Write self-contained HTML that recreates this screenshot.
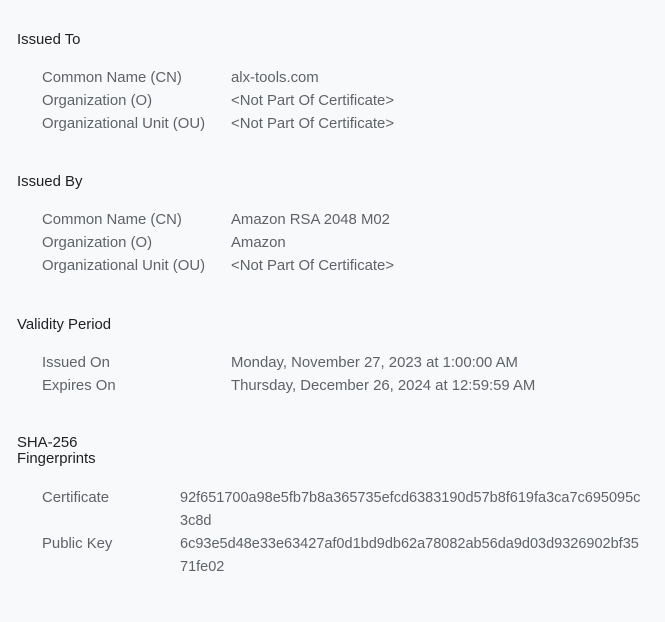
<!DOCTYPE html>
<html><head><style>
html,body{margin:0;padding:0;background:#f8f9fa;width:665px;height:622px;overflow:hidden}
body{font-family:"Liberation Sans",sans-serif;font-size:14.9px;position:relative}
div{position:absolute;line-height:18px;white-space:nowrap}
.h{left:17px;color:#202124;font-size:14.9px}
.l{left:42px;color:#5f6368}
.v{left:231px;color:#5f6368}
.x{left:180px;color:#5f6368;font-size:14.5px}
</style></head><body>
<div class="h" style="top:31px">Issued To</div>
<div class="l" style="top:69px">Common Name (CN)</div><div class="v" style="top:69px">alx-tools.com</div>
<div class="l" style="top:92px">Organization (O)</div><div class="v" style="top:92px">&lt;Not Part Of Certificate&gt;</div>
<div class="l" style="top:115px">Organizational Unit (OU)</div><div class="v" style="top:115px">&lt;Not Part Of Certificate&gt;</div>

<div class="h" style="top:173px">Issued By</div>
<div class="l" style="top:211px">Common Name (CN)</div><div class="v" style="top:211px">Amazon RSA 2048 M02</div>
<div class="l" style="top:234px">Organization (O)</div><div class="v" style="top:234px">Amazon</div>
<div class="l" style="top:257px">Organizational Unit (OU)</div><div class="v" style="top:257px">&lt;Not Part Of Certificate&gt;</div>

<div class="h" style="top:316px">Validity Period</div>
<div class="l" style="top:354px">Issued On</div><div class="v" style="top:354px">Monday, November 27, 2023 at 1:00:00 AM</div>
<div class="l" style="top:377px">Expires On</div><div class="v" style="top:377px">Thursday, December 26, 2024 at 12:59:59 AM</div>

<div class="h" style="top:435px;line-height:16px">SHA-256<br>Fingerprints</div>
<div class="l" style="top:489px">Certificate</div>
<div class="x" style="top:489px">92f651700a98e5fb7b8a365735efcd6383190d57b8f619fa3ca7c695095c</div>
<div class="x" style="top:512px">3c8d</div>
<div class="l" style="top:535px">Public Key</div>
<div class="x" style="top:535px">6c93e5d48e33e63427af0d1bd9db62a78082ab56da9d03d9326902bf35</div>
<div class="x" style="top:558px">71fe02</div>
</body></html>
